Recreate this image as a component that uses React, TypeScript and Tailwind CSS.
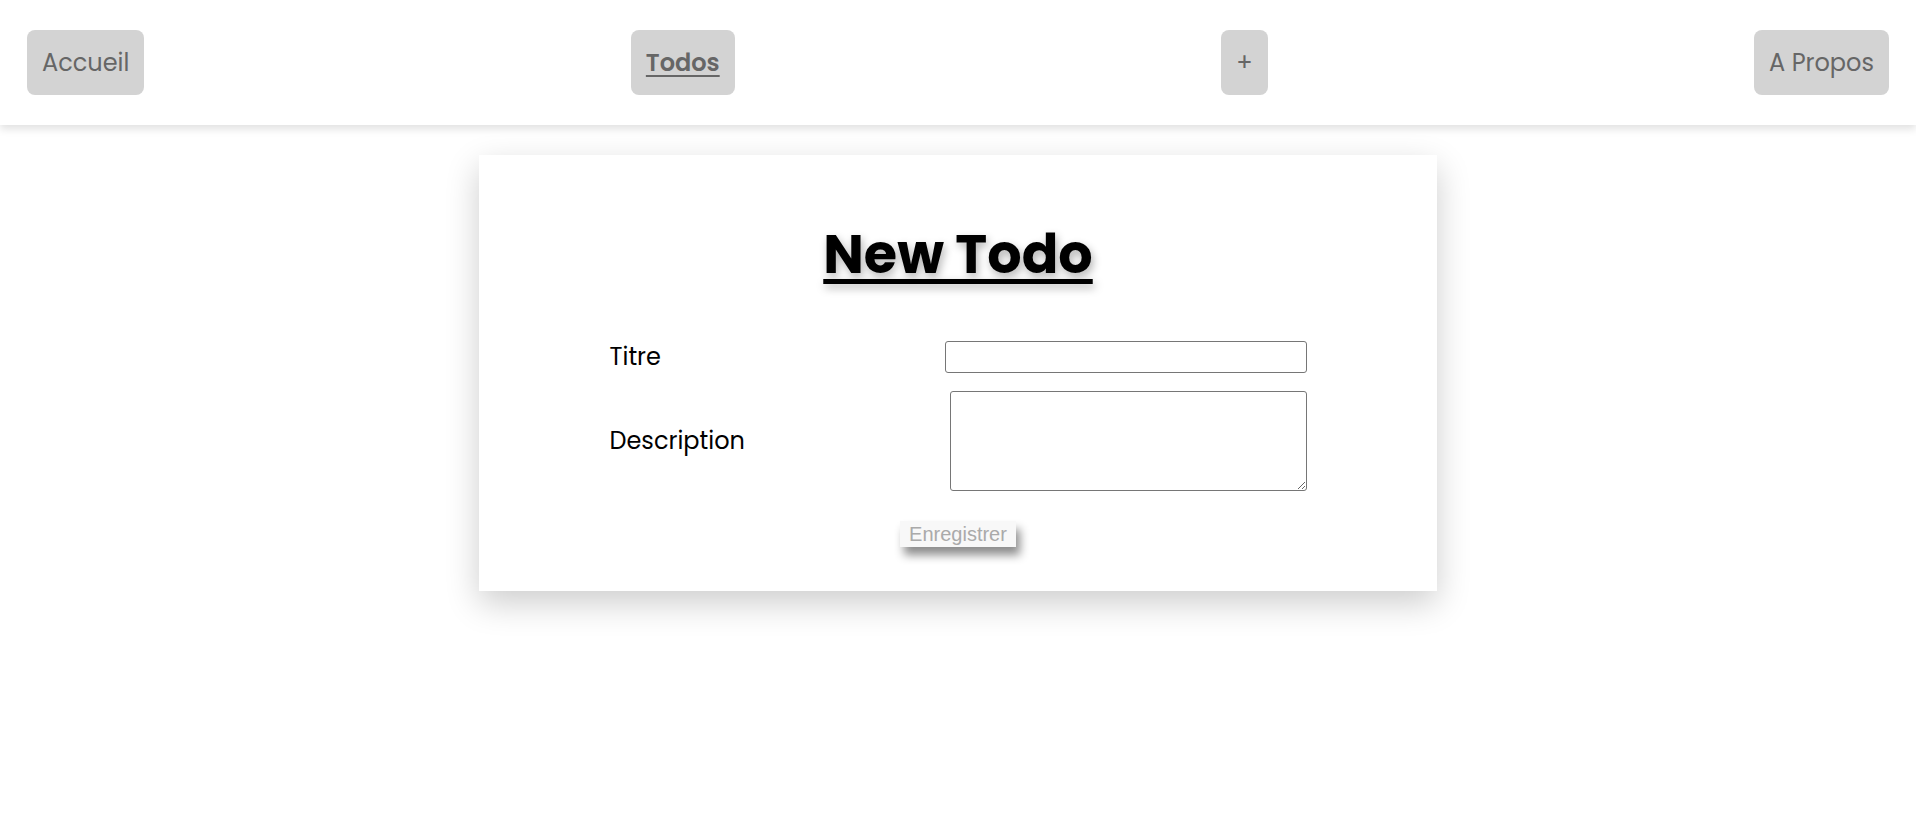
import React from 'react';

const NavButton: React.FC<{ label: string; active?: boolean }> = ({ label, active }) => (
  <button
    className={
      'h-[65px] rounded-lg bg-[#d3d3d3] px-[15px] text-2xl text-[#666] ' +
      (active ? 'font-semibold underline underline-offset-4' : '')
    }
  >
    {label}
  </button>
);

const App: React.FC = () => {
  return (
    <div className="min-h-screen bg-white font-['Poppins','Open_Sans',sans-serif] text-black">
      <nav className="flex h-[125px] items-center justify-between bg-white px-[27px] shadow-[0_4px_8px_rgba(0,0,0,0.12)]">
        <NavButton label="Accueil" />
        <NavButton label="Todos" active />
        <NavButton label="+" />
        <NavButton label="A Propos" />
      </nav>

      <main className="pt-[30px]">
        <div className="mx-auto flex h-[436px] w-1/2 flex-col items-center bg-white pt-[59px] shadow-[0_12px_32px_rgba(0,0,0,0.2)]">
          <h1 className="text-[54px] font-bold leading-[1.5] underline decoration-[5px] underline-offset-[6px] [text-shadow:2px_4px_8px_rgba(0,0,0,0.3)]">
            New Todo
          </h1>

          <form className="mt-[46px] flex w-[697px] flex-col gap-[18px]">
            <div className="flex items-center justify-between">
              <label className="text-2xl">Titre</label>
              <input type="text" className="h-[32px] w-[362px] rounded-[3px] border border-[#767676] px-1" />
            </div>
            <div className="flex items-center justify-between">
              <label className="text-2xl">Description</label>
              <textarea className="h-[100px] w-[357px] rounded-[3px] border border-[#767676] px-1" />
            </div>
            <div className="mt-[12px] flex justify-center">
              <button
                type="button"
                className="h-[26px] w-[116px] bg-[#f8f8f8] font-['Liberation_Sans',Arial,sans-serif] text-[20px] leading-none text-[#aaa] shadow-[4px_8px_10px_rgba(0,0,0,0.45)]"
              >
                Enregistrer
              </button>
            </div>
          </form>
        </div>
      </main>
    </div>
  );
};

export default App;
